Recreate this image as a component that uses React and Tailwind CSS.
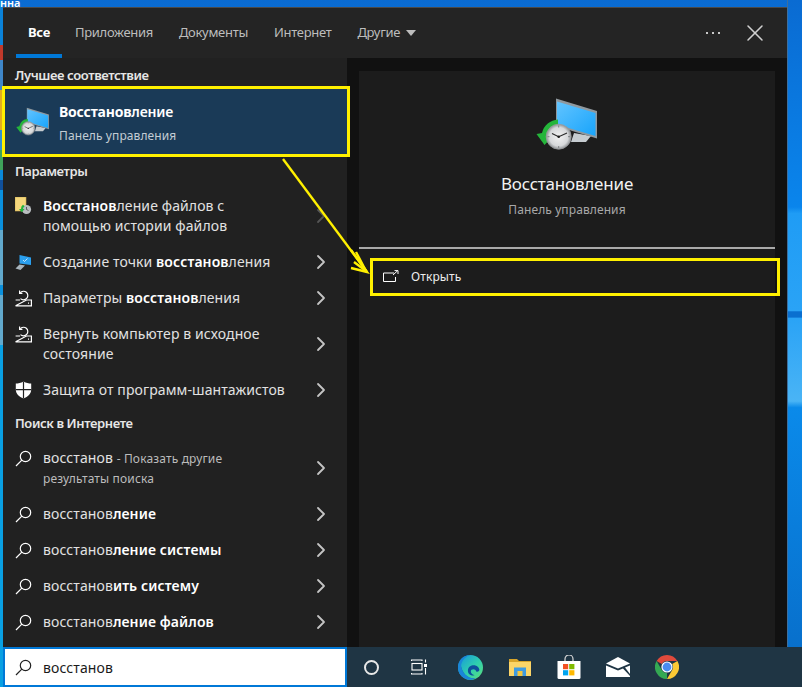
import { X, ChevronRight } from 'lucide-react';

const railColors = [
  'h-[38px] bg-[#0a82d8]',
  'h-[15px] bg-[#c0392b]',
  'h-[30px] bg-[#3f86c8]',
  'h-[40px] bg-[#e2ae1f]',
  'h-[20px] bg-[#2f8fd0]',
  'h-[20px] bg-[#3fa35a]',
  'h-[10px] bg-[#0a88d8]',
  'h-[10px] bg-[#10509a]',
  'h-[40px] bg-[#0a90dc]',
  'h-[55px] bg-[#62a9cc]',
  'h-[10px] bg-[#0a90dc]',
  'h-[50px] bg-[#62a9cc]',
  'flex-1 bg-[#09a0e3]',
];

function SearchIcon({ color = 'white' }) {
  return (
    <svg width="17" height="17" viewBox="0 0 17 17" fill="none" stroke={color} strokeWidth="1.2" className="shrink-0">
      <circle cx="10.5" cy="6.5" r="5.2" />
      <path d="M6.8 10.2 L1 16" />
    </svg>
  );
}

function RecoveryIcon() {
  return (
    <svg width="17" height="17" viewBox="0 0 17 17" fill="none" stroke="white" strokeWidth="1.2" className="shrink-0">
      <path d="M5.2 2.8 A4.3 4.3 0 1 1 5.5 8.6" />
      <path d="M4.6 0.6 V3.4 H7.4" />
      <path d="M0.6 10 H5 M11.5 10 H16.4 V15.8 H0.6 Z" />
      <path d="M13 13.2 H14" />
    </svg>
  );
}

function ShieldIcon() {
  return (
    <svg width="17" height="18" viewBox="0 0 17 18" className="shrink-0">
      <path d="M8.5 0.5 C6 2 3 2.6 0.8 2.6 V8.5 C0.8 12.6 4 15.8 8.5 17.5 C13 15.8 16.2 12.6 16.2 8.5 V2.6 C14 2.6 11 2 8.5 0.5 Z" fill="white" />
      <path d="M8.5 0.5 V17.5 M0.8 8.6 H16.2" stroke="#212121" strokeWidth="1.2" />
    </svg>
  );
}

function LaptopIcon() {
  return (
    <svg width="17" height="17" viewBox="0 0 17 17" className="shrink-0">
      <path d="M4.5 1 L16 3.5 V11 L4.5 9.5 Z" fill="#2a9fee" />
      <path d="M8 6 L9.5 7.5 L12.5 4.5" stroke="white" strokeWidth="0.7" fill="none" />
      <path d="M4.5 10.5 L10 11.5 L5.5 16 L0.5 14.5 Z" fill="#a8b4bc" />
    </svg>
  );
}

function HistoryIcon() {
  return (
    <svg width="17" height="18" viewBox="0 0 17 18" className="shrink-0">
      <rect x="0" y="0" width="11" height="14" fill="#f4d77c" stroke="#c9a94a" strokeWidth="0.6" />
      <circle cx="11.5" cy="12.5" r="4.6" fill="#b9bdc0" />
      <path d="M11.5 10 V12.5 L13.5 13.5" stroke="#333" strokeWidth="0.7" fill="none" />
      <path d="M8 7.8 A5 5 0 0 0 6 12 H4 L6.8 15.2 L9.6 12 H8 A3 3 0 0 1 9.6 9.2 Z" fill="#22b53c" />
    </svg>
  );
}

function RestoreIcon({ width, height }) {
  return (
    <svg width={width} height={height} viewBox="25 10 63 56" className="shrink-0">
      <defs>
        <linearGradient id="screenFill" x1="0" y1="0" x2="1" y2="1">
          <stop offset="0" stopColor="#62c4ff" />
          <stop offset="1" stopColor="#18a4fb" />
        </linearGradient>
        <radialGradient id="clockFill">
          <stop offset="0" stopColor="#f2f2f2" />
          <stop offset="0.75" stopColor="#d6d8da" />
          <stop offset="1" stopColor="#8e9194" />
        </radialGradient>
      </defs>
      <path d="M63 47 L80 50 L75 56 L60 56 Z" fill="#c6ccd0" />
      <path d="M45 12.5 L86 25 V52.5 L45 40 Z" fill="#8f989e" />
      <path d="M46 15.5 L84.5 27 V50 L46 38.5 Z" fill="url(#screenFill)" />
      <path d="M47 33.5 A17.5 17.5 0 0 0 31 47 L25.5 48 L33.5 59 L42 50 L37 50 A11 11 0 0 1 47 40 Z" fill="#24b53a" />
      <circle cx="47.7" cy="50.7" r="12.5" fill="url(#clockFill)" />
      <circle cx="47.7" cy="50.7" r="12.5" fill="none" stroke="#9a9da0" strokeWidth="0.8" />
      <path d="M47.7 50.7 L41 47.5 M47.7 50.7 L56 47" stroke="#2a2a2a" strokeWidth="1.1" fill="none" />
      <circle cx="47.7" cy="50.7" r="1.3" fill="#1a1a1a" />
      <path d="M47.7 39.5 V41.5 M47.7 60 V62 M36.5 50.7 H38.5 M57 50.7 H59" stroke="#77797c" strokeWidth="0.9" />
    </svg>
  );
}

function OpenIcon() {
  return (
    <svg width="16" height="12" viewBox="0 0 16 12" fill="none" stroke="white" strokeWidth="1" className="shrink-0 -mt-[3px]">
      <path d="M11 3 H0.5 V11.5 H12.5 V7" />
      <path d="M10 5 L14.5 0.8 M11.5 0.6 H15 V4" />
    </svg>
  );
}

function TaskViewIcon() {
  return (
    <svg width="17" height="16" viewBox="0 0 17 16" fill="none" stroke="white" strokeWidth="1.1">
      <path d="M0.5 1 H11 M0.5 15 H11 M0.5 0.5 V2 M11 0.5 V2 M0.5 14 V15.5 M11 14 V15.5" />
      <rect x="1" y="4.5" width="10" height="6.5" />
      <path d="M14.5 0.5 V3.5 M14.5 9 V15.5" />
      <rect x="13" y="5" width="3" height="3" fill="white" stroke="none" />
    </svg>
  );
}

function EdgeIcon() {
  return (
    <svg width="25" height="25" viewBox="0 0 24 24">
      <defs>
        <linearGradient id="edgeTop" x1="0" y1="0" x2="1" y2="1">
          <stop offset="0" stopColor="#1593e0" />
          <stop offset="0.55" stopColor="#2fcfae" />
          <stop offset="1" stopColor="#5fe07a" />
        </linearGradient>
      </defs>
      <circle cx="12" cy="12" r="12" fill="url(#edgeTop)" />
      <path d="M3 11 C4 16 8 23 17 22.6 C12 24.5 3.5 23 1 16 C0.5 14 1.5 11.5 3 11 Z" fill="#1367b5" />
      <path d="M0 12 C0 5 5 0 12 0 C8 1 3 5 3 11 C4 17 9 23 17 22.6 C14 24 11 24 9 23.6 C4 22 0 18 0 12 Z" fill="#1a86d8" />
      <path d="M9.5 15 C9.5 11.5 12.5 9.8 15 9.8 C18.5 9.8 20 12 20.5 14 C20.8 15.6 19 16.4 17.5 15.8 C17 13.5 14.5 13 13 14.2 C11.5 15.5 12.5 18.5 16 19.5 C12 20 9.5 18 9.5 15 Z" fill="#0f4f9c" />
    </svg>
  );
}

function FolderIcon() {
  return (
    <svg width="22" height="18" viewBox="0 0 22 18">
      <path d="M0 1 H8 L10 3 H22 V18 H0 Z" fill="#d8a52a" />
      <rect x="0" y="4" width="22" height="14" fill="#fbd568" />
      <rect x="5" y="9.5" width="12" height="8.5" fill="#3f9be0" />
      <rect x="8.5" y="13" width="5" height="5" fill="#f3c63f" />
    </svg>
  );
}

function StoreIcon() {
  return (
    <svg width="24" height="24" viewBox="0 0 24 24">
      <path d="M8 6 V4 A4 4 0 0 1 16 4 V6" fill="none" stroke="#d8d8d8" strokeWidth="1.2" />
      <path d="M0.5 6 H23.5 V22.5 Q23.5 24 22 24 H2 Q0.5 24 0.5 22.5 Z" fill="white" />
      <rect x="6" y="9" width="5.2" height="5.2" fill="#f25022" />
      <rect x="12.2" y="9" width="5.2" height="5.2" fill="#7fba00" />
      <rect x="6" y="15.2" width="5.2" height="5.2" fill="#00a4ef" />
      <rect x="12.2" y="15.2" width="5.2" height="5.2" fill="#ffb900" />
    </svg>
  );
}

function MailIcon() {
  return (
    <svg width="24" height="20" viewBox="0 0 24 20">
      <path d="M12 0 L24 6.5 L12 11.5 L0 6.5 Z" fill="white" />
      <path d="M0 8.5 L12 13.5 L17 11.5 L24 19 V20 H0 Z" fill="white" />
      <path d="M24 8.5 V17 L19 10.5 Z" fill="white" />
    </svg>
  );
}

function ChromeIcon() {
  return (
    <svg width="24" height="24" viewBox="0 0 24 24">
      <path d="M12 0 A12 12 0 0 1 22.4 6 H12 A6 6 0 0 0 6.8 9 L1.6 6 A12 12 0 0 1 12 0 Z" fill="#e04a3c" />
      <path d="M22.4 6 A12 12 0 0 1 12 24 L17.2 15 A6 6 0 0 0 17.2 9 Z" fill="#fcc934" />
      <path d="M1.6 6 L6.8 15 A6 6 0 0 0 12 18 L12 24 A12 12 0 0 1 1.6 6 Z" fill="#34a853" />
      <circle cx="12" cy="12" r="5.6" fill="white" />
      <circle cx="12" cy="12" r="4.4" fill="#4a8cf0" />
    </svg>
  );
}

function SectionLabel({ children }) {
  return <div className="h-[30px] flex items-center pl-3 text-[13px] font-semibold tracking-[-0.4px] text-[#e6e6e6]">{children}</div>;
}

function ResultRow({ icon, tall, dim, children }) {
  return (
    <div className={`flex items-center pl-3 pr-[14px] ${tall ? 'h-14' : 'h-9'}`}>
      <div className={`w-7 shrink-0 flex items-center ${tall ? '-mt-5' : ''}`}>{icon}</div>
      <div className="flex-1 text-sm leading-5 tracking-[0.1px] text-[#e2e2e2]">{children}</div>
      <ChevronRight size={24} strokeWidth={1.8} className={dim ? 'text-[#555555] shrink-0' : 'text-[#c4c4c4] shrink-0'} />
    </div>
  );
}

const tabs = ['Приложения', 'Документы', 'Интернет'];

export default function App() {
  return (
    <div className="relative w-[802px] h-[687px] overflow-hidden flex flex-col font-['Noto_Sans',sans-serif] tracking-[-0.2px]">
      <div className="flex h-[647px] bg-[linear-gradient(180deg,#0a6bd2_0%,#0a85ec_32%,#1f9cf5_33%,#2aa3f6_48%,#0a6fd0_48.2%,#0a6fd0_49%,#2aa3f6_49.2%,#4ab4f5_62%,#0a8aea_63%,#0870cc_100%)]">
        {/* Desktop icons showing past the window edge */}
        <div className="w-[3px] flex flex-col pt-[7px] bg-[#0a82d8]">
          {railColors.map((c) => (
            <div key={c} className={c} />
          ))}
        </div>

        <div className="w-[784px] flex flex-col">
          <div className="h-[7px] overflow-hidden -ml-[3px] text-[11px] leading-[5px] text-white font-semibold tracking-normal">нна</div>

          {/* Tabs */}
          <div className="h-[51px] bg-[#242424] border-t border-[#4a4a4a] flex items-stretch pl-[13px] pr-[18px] text-[13px] tracking-[-0.3px] text-[#bdbdbd]">
            <div className="px-3 pt-1 border-b-[4px] border-[#0078d7] flex items-center font-bold text-white">Все</div>
            {tabs.map((t) => (
              <div key={t} className="px-[13px] flex items-center pb-[1px]">{t}</div>
            ))}
            <div className="px-[13px] flex items-center gap-[6px]">
              Другие
              <span className="w-0 h-0 border-x-[5px] border-x-transparent border-t-[6px] border-t-[#bdbdbd]" />
            </div>
            <div className="ml-auto flex items-center gap-[21px]">
              <span className="flex gap-[4px]">
                <i className="w-[2px] h-[2px] bg-[#c8c8c8]" />
                <i className="w-[2px] h-[2px] bg-[#c8c8c8]" />
                <i className="w-[2px] h-[2px] bg-[#c8c8c8]" />
              </span>
              <X size={28} strokeWidth={1.3} className="text-[#d0d0d0]" />
            </div>
          </div>

          <div className="flex flex-1 min-h-0">
            {/* Results */}
            <div className="w-[344px] bg-[#212121] flex flex-col">
              <div className="h-7 pt-2 pl-3 flex items-center text-[13px] font-semibold tracking-[-0.4px] text-[#e6e6e6]">Лучшее соответствие</div>
              <div className="relative z-10 -ml-px -mr-[3px] h-[71px] border-[3px] border-[#fff000] bg-[#1a3a57] flex items-center pl-[11px]">
                <RestoreIcon width={34} height={31} />
                <div className="ml-[9px] pt-[2px]">
                  <div className="text-sm font-semibold text-white leading-5">
                    <span className="font-bold">Восстанов</span>ление
                  </div>
                  <div className="mt-[6px] text-xs leading-4 tracking-[0.1px] text-[#c3ccd4]">Панель управления</div>
                </div>
              </div>

              <SectionLabel>Параметры</SectionLabel>
              <div className="h-px" />
              <ResultRow icon={<HistoryIcon />} tall dim>
                <b className="font-semibold text-white">Восстанов</b>ление файлов с
                <br />
                помощью истории файлов
              </ResultRow>
              <ResultRow icon={<LaptopIcon />}>
                Создание точки <b className="font-semibold text-white">восстанов</b>ления
              </ResultRow>
              <ResultRow icon={<RecoveryIcon />}>
                Параметры <b className="font-semibold text-white">восстанов</b>ления
              </ResultRow>
              <ResultRow icon={<RecoveryIcon />} tall>
                Вернуть компьютер в исходное
                <br />
                состояние
              </ResultRow>
              <ResultRow icon={<ShieldIcon />}>Защита от программ-шантажистов</ResultRow>

              <div className="h-8 flex items-center pl-3 text-[13px] font-semibold tracking-[-0.4px] text-[#e6e6e6]">Поиск в Интернете</div>
              <ResultRow icon={<SearchIcon />} tall>
                восстанов <span className="text-xs tracking-[0.15px] text-[#bcbcbc]">- Показать другие</span>
                <br />
                <span className="text-xs tracking-[0.15px] text-[#bcbcbc]">результаты поиска</span>
              </ResultRow>
              <ResultRow icon={<SearchIcon />}>
                восстанов<b className="font-semibold text-white">ление</b>
              </ResultRow>
              <ResultRow icon={<SearchIcon />}>
                восстанов<b className="font-semibold text-white">ление системы</b>
              </ResultRow>
              <ResultRow icon={<SearchIcon />}>
                восстанов<b className="font-semibold text-white">ить систему</b>
              </ResultRow>
              <ResultRow icon={<SearchIcon />}>
                восстанов<b className="font-semibold text-white">ление файлов</b>
              </ResultRow>
            </div>

            {/* Preview */}
            <div className="flex-1 bg-[#111111] pt-[13px] px-3 flex">
              <div className="flex-1 bg-[#1c1c1c] flex flex-col">
                <div className="flex flex-col items-center pt-[25px]">
                  <RestoreIcon width={63} height={56} />
                  <div className="mt-5 text-[17px] leading-6 text-[#f2f2f2]">Восстановление</div>
                  <div className="mt-[6px] text-xs leading-4 tracking-[0.1px] text-[#a8a8a8]">Панель управления</div>
                </div>
                <div className="mt-[29px] h-[2px] bg-[#a9a9a9]" />
                <div className="relative z-10 ml-[11px] -mr-[5px] mt-[9px] h-[38px] border-[3px] border-[#fff000] flex items-center pl-[10px] gap-[12px] text-xs tracking-[0.1px] text-[#ededed]">
                  <OpenIcon />
                  Открыть
                </div>
              </div>
            </div>
          </div>
        </div>

        <div className="flex-1 border-l border-[#3d6f9e]" />
      </div>

      {/* Taskbar */}
      <div className="flex-1 flex bg-[#1f3544]">
        <div className="w-[3px] bg-[#09a0e3]" />
        <div className="w-[344px] bg-white border-2 border-[#0078d7] flex items-center pl-[10px] gap-[11px] text-sm tracking-[0.1px] text-[#1a1a1a]">
          <SearchIcon color="#222222" />
          <span className="pt-px">восстанов</span>
        </div>
        <div className="flex items-center">
          <div className="w-12 flex justify-center">
            <span className="w-[15px] h-[15px] rounded-full border-[2px] border-[#e8e8e8]" />
          </div>
          <div className="w-12 flex justify-center">
            <TaskViewIcon />
          </div>
          <div className="w-[49px] ml-[3px] flex justify-center"><EdgeIcon /></div>
          <div className="w-[49px] flex justify-center"><FolderIcon /></div>
          <div className="w-[49px] flex justify-center"><StoreIcon /></div>
          <div className="w-[49px] flex justify-center"><MailIcon /></div>
          <div className="w-[49px] flex justify-center"><ChromeIcon /></div>
        </div>
      </div>

      {/* Arrow drawn over the screenshot */}
      <svg className="absolute inset-0 pointer-events-none z-20" width="802" height="687" fill="none" stroke="#fff000" strokeWidth="2.4">
        <path d="M283 159 L367 272" />
        <path d="M351 250 L367 272 L351 268" />
        <path d="M356 252 L366 271 L354 262" />
      </svg>
    </div>
  );
}
